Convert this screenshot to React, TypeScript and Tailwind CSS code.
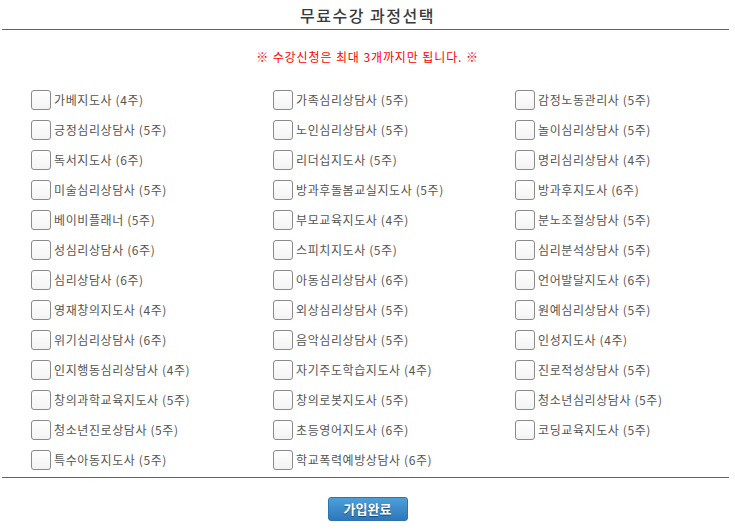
import { useState } from "react";

const courses = [
  "가베지도사 (4주)",
  "가족심리상담사 (5주)",
  "감정노동관리사 (5주)",
  "긍정심리상담사 (5주)",
  "노인심리상담사 (5주)",
  "놀이심리상담사 (5주)",
  "독서지도사 (6주)",
  "리더십지도사 (5주)",
  "명리심리상담사 (4주)",
  "미술심리상담사 (5주)",
  "방과후돌봄교실지도사 (5주)",
  "방과후지도사 (6주)",
  "베이비플래너 (5주)",
  "부모교육지도사 (4주)",
  "분노조절상담사 (5주)",
  "성심리상담사 (6주)",
  "스피치지도사 (5주)",
  "심리분석상담사 (5주)",
  "심리상담사 (6주)",
  "아동심리상담사 (6주)",
  "언어발달지도사 (6주)",
  "영재창의지도사 (4주)",
  "외상심리상담사 (5주)",
  "원예심리상담사 (5주)",
  "위기심리상담사 (6주)",
  "음악심리상담사 (5주)",
  "인성지도사 (4주)",
  "인지행동심리상담사 (4주)",
  "자기주도학습지도사 (4주)",
  "진로적성상담사 (5주)",
  "창의과학교육지도사 (5주)",
  "창의로봇지도사 (5주)",
  "청소년심리상담사 (5주)",
  "청소년진로상담사 (5주)",
  "초등영어지도사 (6주)",
  "코딩교육지도사 (5주)",
  "특수아동지도사 (5주)",
  "학교폭력예방상담사 (6주)",
];

export default function App() {
  const [checked, setChecked] = useState<string[]>([]);

  const toggle = (name: string) => {
    setChecked(prev =>
      prev.includes(name) ? prev.filter(n => n !== name) : prev.length >= 3 ? prev : [...prev, name]
    );
  };

  return (
    <div className="w-[735px] h-[530px] bg-white font-['Noto_Sans_CJK_KR','Noto_Sans',sans-serif] overflow-hidden">
      <div className="h-[29px] flex items-center justify-center text-[16px] font-medium tracking-[1.5px] text-[#3a3a3a] leading-none pt-[1px]">
        무료수강 과정선택
      </div>
      <div className="ml-[2px] mr-[6px] h-[1px] bg-[#1f78a6]"></div>

      <div className="h-[55px] flex items-center justify-center text-[12px] tracking-[0.9px] text-[#ff0000] pb-[1px]">
        ※ 수강신청은 최대 3개까지만 됩니다. ※
      </div>

      <ul className="grid grid-cols-[242px_242px_242px] pl-[31px]">
        {courses.map(c => (
          <li key={c} className="h-[30px] flex items-center gap-[3px]">
            <button
              type="button"
              onClick={() => toggle(c)}
              className="w-[20px] h-[20px] rounded-[3px] border border-[#8a8a8a] bg-gradient-to-b from-white to-[#f3f3f3] flex items-center justify-center"
            >
              {checked.includes(c) && (
                <svg width="14" height="14" viewBox="0 0 14 14">
                  <path d="M2 7l3.5 3.5L12 3.5" fill="none" stroke="#333" strokeWidth="2" />
                </svg>
              )}
            </button>
            <span className="text-[12px] tracking-[0.6px] text-[#555] whitespace-nowrap">{c}</span>
          </li>
        ))}
      </ul>

      <div className="ml-[2px] mr-[6px] mt-[2px] h-[1px] bg-[#1f78a6]"></div>

      <div className="flex justify-center pt-[19px]">
        <button
          type="button"
          className="w-[80px] h-[24px] rounded-[3px] border border-[#2f73ad] bg-gradient-to-b from-[#4d9fd9] to-[#2d78bb] text-white text-[13px] font-bold [text-shadow:0_1px_1px_rgba(0,0,0,0.45)]"
        >
          가입완료
        </button>
      </div>
    </div>
  );
}
